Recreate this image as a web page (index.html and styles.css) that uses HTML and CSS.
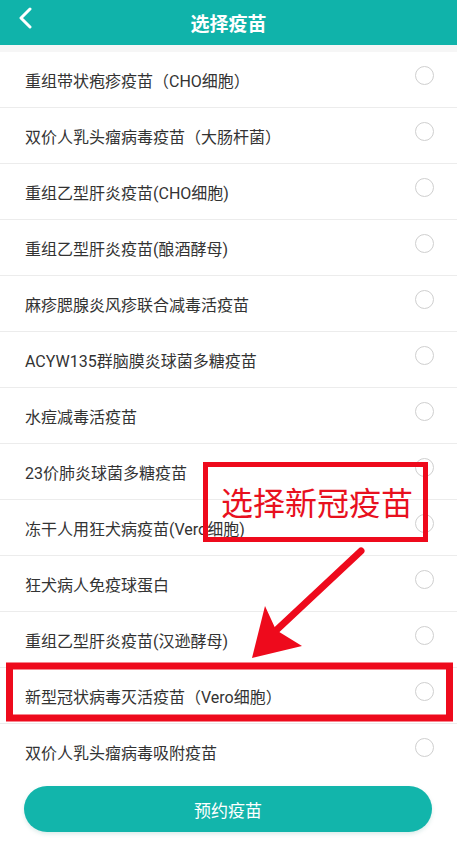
FILE: index.html
```html
<!DOCTYPE html>
<html lang="zh">
<head>
    <meta charset="UTF-8">
    <meta name="viewport" content="width=device-width, initial-scale=1.0">
    <title>选择疫苗</title>
    <link rel="stylesheet" href="styles.css">
</head>
<body>

<div class="page">
    <div class="header">
        <svg class="back" width="16" height="22" viewBox="0 0 16 22">
            <path d="M12 2 L3 11 L12 20" fill="none" stroke="#fff" stroke-width="3" stroke-linecap="round" stroke-linejoin="round"/>
        </svg>
        <h2>选择疫苗</h2>
    </div>
    <div class="gap"></div>

    <ul class="list">
        <li><span>重组带状疱疹疫苗（CHO细胞）</span><i class="radio"></i></li>
        <li><span>双价人乳头瘤病毒疫苗（大肠杆菌）</span><i class="radio"></i></li>
        <li><span>重组乙型肝炎疫苗(CHO细胞)</span><i class="radio"></i></li>
        <li><span>重组乙型肝炎疫苗(酿酒酵母)</span><i class="radio"></i></li>
        <li><span>麻疹腮腺炎风疹联合减毒活疫苗</span><i class="radio"></i></li>
        <li><span>ACYW135群脑膜炎球菌多糖疫苗</span><i class="radio"></i></li>
        <li><span>水痘减毒活疫苗</span><i class="radio"></i></li>
        <li><span>23价肺炎球菌多糖疫苗</span><i class="radio"></i></li>
        <li><span>冻干人用狂犬病疫苗(Vero细胞)</span><i class="radio"></i></li>
        <li><span>狂犬病人免疫球蛋白</span><i class="radio"></i></li>
        <li><span>重组乙型肝炎疫苗(汉逊酵母)</span><i class="radio"></i></li>
        <li><span>新型冠状病毒灭活疫苗（Vero细胞）</span><i class="radio"></i></li>
        <li class="last"><span>双价人乳头瘤病毒吸附疫苗</span><i class="radio"></i></li>
    </ul>

    <div class="footer">
        <button type="button">预约疫苗</button>
    </div>

    <!-- 标注 -->
    <svg class="marks" width="457" height="861" viewBox="0 0 457 861">
        <rect x="205.5" y="464.5" width="220" height="75" fill="none" stroke="#ee0a1c" stroke-width="5"/>
        <rect x="9.5" y="666" width="440" height="52" fill="none" stroke="#ee0a1c" stroke-width="7"/>
        <path d="M361 551 L268 638" stroke="#ee0a1c" stroke-width="7" stroke-linecap="round"/>
        <path d="M252 658 L265 606 L276 630 L302 646 Z" fill="#ee0a1c"/>
    </svg>
    <div class="note">选择新冠疫苗</div>
</div>

</body>
</html>
```

FILE: styles.css
```css
body {
    margin: 0;
    font-family: Roboto, "Noto Sans CJK SC", sans-serif;
    background: #fff;
}

.page {
    position: relative;
    width: 457px;
    height: 861px;
    overflow: hidden;
}

.header {
    height: 45px;
    background-color: #10b3aa;
    display: flex;
    align-items: center;
    justify-content: center;
    position: relative;
}

.header h2 {
    margin: 0;
    color: #fff;
    font-size: 19px;
    font-weight: bold;
}

.back {
    position: absolute;
    left: 18px;
    top: 7px;
}

.gap {
    height: 7px;
    background: #f6f6f6;
}

.list {
    list-style: none;
    margin: 0;
    padding: 0;
}

.list li {
    height: 55px;
    border-bottom: 1px solid #ececec;
    display: flex;
    align-items: center;
    justify-content: space-between;
    padding: 0 23px 0 25px;
    color: #333;
    font-size: 16px;
}

.list li.last {
    border-bottom: none;
}

.radio {
    width: 17px;
    height: 17px;
    border: 1.5px solid #cfcfcf;
    border-radius: 50%;
    margin-bottom: 8px;
}

.footer {
    padding: 7px 25px 0 24px;
}

.footer button {
    width: 100%;
    height: 46px;
    border: none;
    border-radius: 23px;
    background-color: #12b5ab;
    color: #fff;
    font-size: 17px;
    font-family: inherit;
    box-shadow: 0 2px 4px rgba(0, 120, 110, 0.15);
}

.marks {
    position: absolute;
    left: 0;
    top: 0;
    pointer-events: none;
}

.note {
    position: absolute;
    left: 221px;
    top: 481px;
    color: #e8101e;
    font-size: 32px;
    font-family: "Noto Sans CJK SC", sans-serif;
    line-height: 40px;
    letter-spacing: 0;
}
```
